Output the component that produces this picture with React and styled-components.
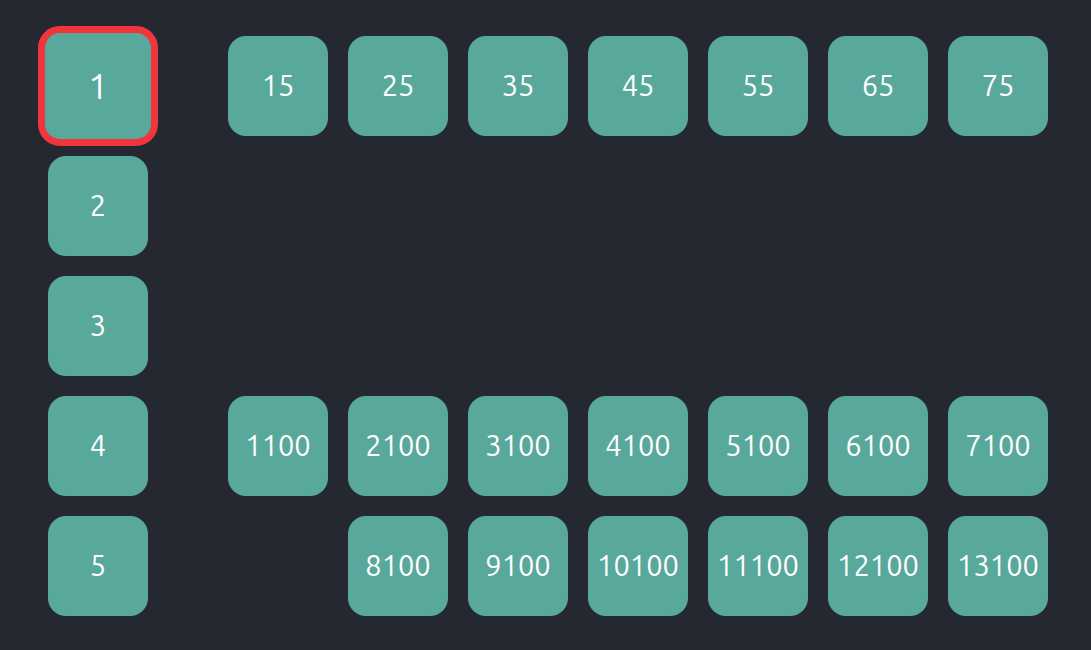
import React, { useState } from "react";
import styled, { createGlobalStyle } from "styled-components";

const GlobalStyle = createGlobalStyle`
  body {
    margin: 0;
    background: #262831;
  }
`;

const Board = styled.main`
  display: flex;
  align-items: flex-start;
  gap: 60px;
  min-height: 100vh;
  box-sizing: border-box;
  padding: 26px 38px;
  font-family: Ubuntu, "Noto Sans", sans-serif;
`;

const Column = styled.nav`
  display: grid;
  grid-template-columns: 120px;
  grid-auto-rows: 120px;
  place-items: center;
`;

const Rows = styled.section`
  display: grid;
  grid-template-rows: repeat(5, 120px);
`;

const Row = styled.div`
  display: flex;
  align-items: center;
  justify-content: flex-end;
  gap: 20px;
  padding: 0 10px;
`;

const Tile = styled.button`
  display: flex;
  align-items: center;
  justify-content: center;
  flex: none;
  box-sizing: border-box;
  width: ${(p) => (p.$selected ? 120 : 100)}px;
  height: ${(p) => (p.$selected ? 120 : 100)}px;
  padding: 0 0 ${(p) => (p.$selected ? 0 : 2)}px;
  border: ${(p) => (p.$selected ? "7px solid #f0353b" : "none")};
  border-radius: ${(p) => (p.$selected ? 22 : 18)}px;
  background: #58a89c;
  color: #fff;
  font-family: inherit;
  font-size: ${(p) => (p.$selected ? 35 : 29)}px;
  line-height: 40px;
  cursor: pointer;
`;

const levels = [1, 2, 3, 4, 5];
const rows = [
  [15, 25, 35, 45, 55, 65, 75],
  [],
  [],
  [1100, 2100, 3100, 4100, 5100, 6100, 7100],
  [8100, 9100, 10100, 11100, 12100, 13100],
];

export default function App() {
  const [selected, setSelected] = useState(1);
  const renderTile = (n) => (
    <Tile
      key={n}
      type="button"
      $selected={selected === n}
      aria-pressed={selected === n}
      onClick={() => setSelected(n)}
    >
      {n}
    </Tile>
  );

  return (
    <>
      <GlobalStyle />
      <Board>
        <Column>{levels.map(renderTile)}</Column>
        <Rows>
          {rows.map((row, i) => (
            <Row key={i}>{row.map(renderTile)}</Row>
          ))}
        </Rows>
      </Board>
    </>
  );
}
